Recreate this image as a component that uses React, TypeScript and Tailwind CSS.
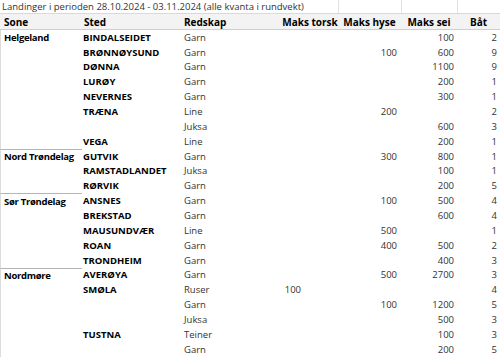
import React from 'react';

type Row = {
  sone?: string;
  sted?: string;
  redskap: string;
  torsk?: string;
  hyse?: string;
  sei?: string;
  bat: string;
  first?: boolean;
};

const rows: Row[] = [
  { sone: 'Helgeland', sted: 'BINDALSEIDET', redskap: 'Garn', sei: '100', bat: '2' },
  { sted: 'BRØNNØYSUND', redskap: 'Garn', hyse: '100', sei: '600', bat: '9' },
  { sted: 'DØNNA', redskap: 'Garn', sei: '1100', bat: '9' },
  { sted: 'LURØY', redskap: 'Garn', sei: '200', bat: '1' },
  { sted: 'NEVERNES', redskap: 'Garn', sei: '300', bat: '1' },
  { sted: 'TRÆNA', redskap: 'Line', hyse: '200', bat: '2' },
  { redskap: 'Juksa', sei: '600', bat: '3' },
  { sted: 'VEGA', redskap: 'Line', sei: '200', bat: '1' },
  { sone: 'Nord Trøndelag', first: true, sted: 'GUTVIK', redskap: 'Garn', hyse: '300', sei: '800', bat: '1' },
  { sted: 'RAMSTADLANDET', redskap: 'Juksa', sei: '100', bat: '1' },
  { sted: 'RØRVIK', redskap: 'Garn', sei: '200', bat: '5' },
  { sone: 'Sør Trøndelag', first: true, sted: 'ANSNES', redskap: 'Garn', hyse: '100', sei: '500', bat: '4' },
  { sted: 'BREKSTAD', redskap: 'Garn', sei: '600', bat: '4' },
  { sted: 'MAUSUNDVÆR', redskap: 'Line', hyse: '500', bat: '1' },
  { sted: 'ROAN', redskap: 'Garn', hyse: '400', sei: '500', bat: '2' },
  { sted: 'TRONDHEIM', redskap: 'Garn', sei: '400', bat: '3' },
  { sone: 'Nordmøre', first: true, sted: 'AVERØYA', redskap: 'Garn', hyse: '500', sei: '2700', bat: '3' },
  { sted: 'SMØLA', redskap: 'Ruser', torsk: '100', bat: '4' },
  { redskap: 'Garn', hyse: '100', sei: '1200', bat: '5' },
  { redskap: 'Juksa', sei: '500', bat: '3' },
  { sted: 'TUSTNA', redskap: 'Teiner', sei: '100', bat: '3' },
  { redskap: 'Garn', sei: '200', bat: '5' },
];

const cols = 'grid grid-cols-[82px_99px_101px_56px_63px_56px_43px]';

export default function App() {
  return (
    <div
      className="w-[500px] h-[358px] overflow-hidden bg-white text-[9.5px] leading-none text-[#222]"
      style={{ fontFamily: '"Open Sans", "Liberation Sans", sans-serif' }}
    >
      {/* title row */}
      <div className={`${cols} h-[14px] border-b border-[#d9d9d9]`}>
        <div className="col-span-4 pl-[2px] flex items-center whitespace-nowrap text-[#333]">
          Landinger i perioden 28.10.2024 - 03.11.2024 (alle kvanta i rundvekt)
        </div>
        <div className="border-l border-[#e2e2e2]" />
        <div className="border-l border-[#e2e2e2]" />
        <div className="border-l border-[#e2e2e2]" />
      </div>

      {/* header */}
      <div className={`${cols} h-[16px] bg-[#f3f3f3] border-b border-[#cfcfcf] font-bold text-black text-[10px]`}>
        <div className="pl-[4px] flex items-center">Sone</div>
        <div className="pl-[2px] flex items-center">Sted</div>
        <div className="pl-[3px] flex items-center">Redskap</div>
        <div className="flex items-center justify-center">Maks torsk</div>
        <div className="flex items-center justify-center">Maks hyse</div>
        <div className="flex items-center justify-center">Maks sei</div>
        <div className="flex items-center justify-center">Båt</div>
      </div>

      {rows.map((r, i) => (
        <div key={i} className={`${cols} h-[14.86px]`}>
          <div
            className={`pl-[3px] flex items-center font-bold text-black whitespace-nowrap tracking-[-0.3px] border-l border-[#dcdcdc] ${
              r.first ? 'border-t border-t-[#b5b5b5]' : ''
            }`}
          >
            {r.sone}
          </div>
          <div className="pl-[1px] flex items-center font-bold text-black whitespace-nowrap">{r.sted}</div>
          <div className="pl-[3px] flex items-center text-[#333]">{r.redskap}</div>
          <div className="pr-[37px] flex items-center justify-end text-[#333]">{r.torsk}</div>
          <div className="pr-[4px] flex items-center justify-end text-[#333]">{r.hyse}</div>
          <div className="pr-[3px] flex items-center justify-end text-[#333]">{r.sei}</div>
          <div className="pr-[3px] flex items-center justify-end text-[#333]">{r.bat}</div>
        </div>
      ))}
    </div>
  );
}
